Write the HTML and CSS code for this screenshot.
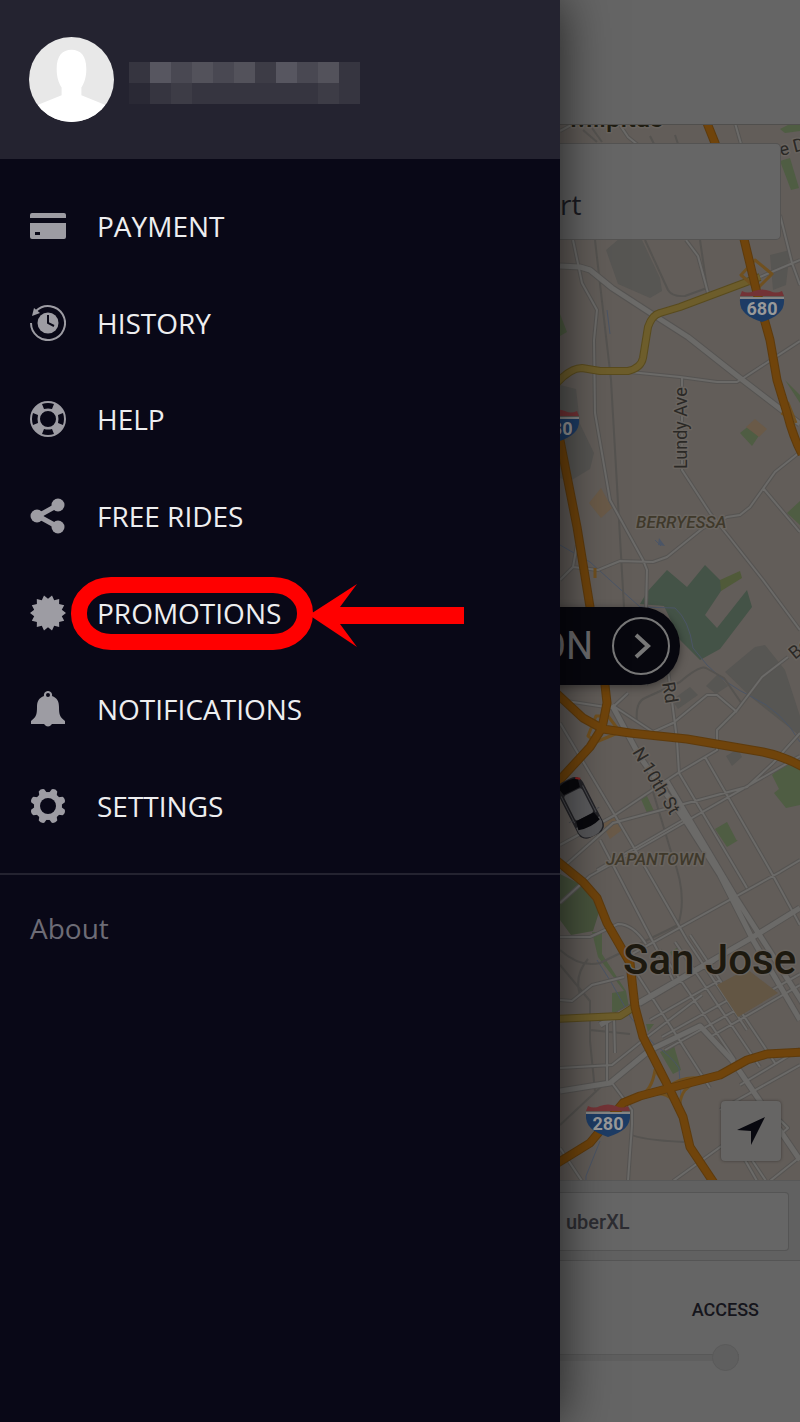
FILE: index.html
```html
<!DOCTYPE html>
<html lang="en">
<head>
    <meta charset="UTF-8">
    <meta name="viewport" content="width=device-width, initial-scale=1.0">
    <title>Menu</title>
    <link rel="stylesheet" href="styles.css">
</head>
<body>

    <div class="app">

        <!-- Side menu -->
        <aside class="drawer">
            <header class="profile">
                <svg class="avatar" viewBox="0 0 86 86" role="img" aria-label="Profile photo">
                    <clipPath id="round"><circle cx="43" cy="43" r="43"/></clipPath>
                    <g clip-path="url(#round)">
                        <rect width="86" height="86" fill="#e8e8e8"/>
                        <path fill="#fff" d="M43 13c9 0 15 6 15 19 0 9-2 14-5 19v8l25 10v17H8V69l25-10v-8c-3-5-5-10-5-19 0-13 6-19 15-19z"/>
                    </g>
                </svg>
                <svg class="name" viewBox="0 0 11 2" shape-rendering="crispEdges" aria-hidden="true">
                    <rect width="11" height="2" fill="#363540"/>
                    <path fill="#575660" d="M1 0h1v1h-1zM7 0h1v1h-1z"/>
                    <path fill="#53525b" d="M3 0h1v1h-1zM5 0h1v1h-1zM9 0h1v1h-1z"/>
                    <path fill="#494852" d="M2 0h1v1h-1zM4 0h1v1h-1zM8 0h1v1h-1z"/>
                    <path fill="#3d3c46" d="M6 0h1v1h-1zM2 1h1v1h-1zM9 1h1v1h-1z"/>
                    <path fill="#2a2935" d="M0 1h1v1h-1z"/>
                </svg>
            </header>

            <nav>
                <ul class="menu">
                    <li><a href="#payment">
                        <svg viewBox="0 0 36 36"><path d="M2 5h32a2 2 0 0 1 2 2v3H0V7a2 2 0 0 1 2-2z"/><path fill-rule="evenodd" d="M0 15h36v14a2 2 0 0 1-2 2H2a2 2 0 0 1-2-2zM5 24v3h5v-3z"/></svg>
                        PAYMENT</a></li>
                    <li><a href="#history">
                        <svg viewBox="0 0 36 36"><path class="line" d="M1 18a17 17 0 1 0 5-12"/><path d="M4 3l6 5-8 3z"/><circle cx="18" cy="18" r="10.500"/><path class="cut" d="M18 10v8l6 3"/></svg>
                        HISTORY</a></li>
                    <li><a href="#help">
                        <svg viewBox="0 0 36 36"><path fill-rule="evenodd" d="M18 0a18 18 0 1 0 0 36 18 18 0 0 0 0-36zm0 10a8 8 0 1 1 0 16 8 8 0 0 1 0-16z"/><g class="hole"><path id="gap" d="M12 3q6-2 12 0l-2 5q-4-1-8 0z"/><use href="#gap" transform="rotate(90 18 18)"/><use href="#gap" transform="rotate(180 18 18)"/><use href="#gap" transform="rotate(270 18 18)"/></g></svg>
                        HELP</a></li>
                    <li><a href="#free-rides">
                        <svg viewBox="0 0 36 36"><path class="link" d="M28 7L8 18l20 11"/><circle cx="28" cy="7" r="6.500"/><circle cx="7" cy="18" r="6.500"/><circle cx="28" cy="29" r="6.500"/></svg>
                        FREE RIDES</a></li>
                    <li><a href="#promotions">
                        <svg viewBox="0 0 36 36"><path d="M18 3.800L22 .5l2.200 4.700 5-1.300-.1 5.200 5.100 1.100-2.400 4.600L36 18l-4.200 3.200 2.400 4.600-5.100 1.100.1 5.200-5-1.300-2.200 4.700-4-3.300-4 3.300-2.200-4.700-5 1.300.1-5.200-5.100-1.100 2.400-4.600L0 18l4.200-3.200-2.400-4.600 5.100-1.100-.1-5.200 5 1.300L14 .5z"/></svg>
                        PROMOTIONS</a>
                        <svg class="callout" viewBox="0 0 394 73" aria-hidden="true">
                            <rect x="8" y="8" width="226" height="57" rx="32" ry="28" fill="none" stroke="#f00" stroke-width="16"/>
                            <path fill="#f00" d="M238 38l48-31-17 23h124v17H269l17 23z"/>
                        </svg>
                    </li>
                    <li><a href="#notifications">
                        <svg viewBox="0 0 36 36"><path fill-rule="evenodd" d="M18 0a4 4 0 0 1 4 5c5 2 7 5 7 11 0 8 1 10 6 14v3H22q-4 5-8 0H1v-3c5-4 6-6 6-14 0-6 2-9 7-11a4 4 0 0 1 4-5zm0 2a2 2 0 1 0 0 4 2 2 0 0 0 0-4z"/></svg>
                        NOTIFICATIONS</a></li>
                    <li><a href="#settings">
                        <svg viewBox="0 0 36 36"><circle cx="18" cy="18" r="14"/><path id="tooth" d="M14 5l1-4q3-2 6 0l1 4v26l-1 4q-3 2-6 0l-1-4z" transform="rotate(22.500 18 18)"/><use href="#tooth" transform="rotate(45 18 18)"/><use href="#tooth" transform="rotate(90 18 18)"/><use href="#tooth" transform="rotate(135 18 18)"/><circle class="hole" cx="18" cy="18" r="8"/></svg>
                        SETTINGS</a></li>
                </ul>
            </nav>

            <a class="about" href="#about">About</a>
        </aside>

        <!-- Ride screen, dimmed behind the menu -->
        <main class="ride">
            <header class="topbar"></header>

            <section class="map">
                <svg class="streets" viewBox="560 125 240 1056" preserveAspectRatio="xMinYMin slice" role="img" aria-label="Map of San Jose">
                    <defs>
                        <g id="shield">
                            <path fill="#1d3c65" d="M-22-5h44c1 12-7 18-22 23-15-5-23-11-22-23z"/>
                            <path fill="#733336" d="M-20-13q6 3 12 0 8-3 16 0 6 3 12 0l2 5h-44z"/>
                            <path stroke="#858585" stroke-width="2" d="M-22-6h44"/>
                        </g>
                    </defs>

                    <!-- parks, water and blocks -->
                    <g fill="#4f5d43">
                        <path d="M780 129l10-5h10v7l-15 2zM780 161l10-3 9 30-8 2zM560 314l7 18-7 4zM740 433l10-8 10 9-8 12zM787 513l13-12v24zM785 380l15 15v8z"/>
                        <path d="M640 797l6-3 8 17-6 4zM715 829l12-7 10 19-10 6zM772 775l12-12 16 6v36l-14 3-12-15 5-4zM724 840l14 0-10 6z"/>
                        <path fill="#48543d" d="M560 874l20 10 20 25-7 22-22 4-11-15z"/>
                        <path d="M592 932h10v22l24 37 4 22-18-1v-19l12-2-26-34zM660 1052l14-6 7 24-8 4zM646 1024l8 0-6 8zM670 952l10-6 3 8-10 4z"/>
                    </g>
                    <path fill="#445347" d="M647 592l20-22 20 17 18-22 20 20-20 30 12 13 30-38 5 17-32 42-20 11-20-20-16-34-24-2z"/>
                    <path fill="#505a39" d="M720 580l20-9 2 7-21 13z"/>
                    <g fill="#575653">
                        <path d="M606 250l14-12 22 2 18 38 2 13-12 7-32-14zM560 385l16 4 4 35 14 29-4 16-20 12-10-3zM770 255l20-5-4 35-13 5z"/>
                        <path d="M725 672l30-25 10-2 20 25 15 46v20l-48-38zM706 686l12-12 10 12-12 8zM672 700l18-13 8 8-20 14zM726 756l12-7 4 8-10 9z"/>
                    </g>
                    <path fill="#6a5a48" d="M589 503l12-15 11 20-11 10zM746 427l9-8 12 10-8 8zM601 822l12-8 9 16-12 9z"/>
                    <path class="river" d="M560 545l30 17 50 45 35 1q14 12 18 40l14 17q20 20 45 32 30 14 48 45M655 540l6 6M607 310l3 24M597 960l14 22 20 36 22 25q20 15 26 25l4 60 15 30M600 1141l-14 35v5"/>
                    <path fill="#4b5566" d="M659 538l6 8-7-1z"/>

                    <!-- rail and minor lines -->
                    <path class="rail" d="M595 240l16 140 7 123 6 104M645 240l23 50q4 7 17 6l22-8-7-48M583 130l14 12M592 128l10 14M675 135l3 9M650 136l4 8M637 722q-2-20 8-24l35-16q20-17 26-14l18 10 18 26M560 950q20 18 40 13l78-38q10-30-6-70l-21-70M560 965l30 36v40l5 50M590 1030l40 4M630 1134q10 6 54 8M560 1125l45-42M580 995q-6-20 8-36"/>

                    <!-- streets -->
                    <g class="casing">
                        <path id="minor" d="M560 131l13-7M620 125l8 12 10 8M735 123l6 21M573 240l9 43 15 27-3 30 1 73 15 87 33 60 4 10-1 40M686 240l12 16 10 37M780 215l12 48 8 22M760 277l40-17M800 341l-55 36-8 5h-20l-37-5-50-5M682 378v92l28 43 20 25 33 42 37 50M560 580l13-13 25 3 22-9 33 1 14-5 36-29 24-11 13-2 10-8 25-35 25-20M763 488l37 44M573 567l4-22M646 685l9-25M668 670l9 70 2 33 68 115M560 845l55-30 63-42 39-23v-20l20-20 25-33 26-20M615 707l38 25 20-9 34-28h10l20 17M560 870l53-47 134-36 26-24 27-30M560 723l53 89 24 41 50 87 60 90M600 840l73 140M705 757l65 113 30 55M597 870l93-54M560 700l52 8 16-15M560 903l30-27 27-15 183-105M630 955l150-83 20-12M560 937h30l28-13q15 0 28 20M560 1000l12 1 20-16 32-8M560 1068l52-3 35-28 55-42M607 1017v65M614 1017l1 36M630 963l80 125M660 950l75 110M675 942l85 125M690 935l85 128M640 1005l75-44M650 1020l70-40M662 1037l75-42M665 1050l135-76M710 1037l90-52M720 1110l80-45M740 1085l60-36M612 1083l20 27v15l-4 56M560 1148l22 33M673 1181l50-36M745 1160l12 21M752 1160l14 21M770 1181l30-24M780 1120l8 8-12 10"/>
                        <path class="wide" d="M560 266l20 1 10 3 22 18 40 26 36 23 52 41 60 46M612 705l28 52 47 66 33 52 33 65 47 80M666 780l70 118 70 110M800 908l-47 29-153 88M560 1091l50-8 40-33 50-24 32 34 68 100"/>
                    </g>
                    <use class="street" href="#minor"/>
                    <path class="avenue" d="M560 266l20 1 10 3 22 18 40 26 36 23 52 41 60 46M612 705l28 52 47 66 33 52 33 65 47 80M666 780l70 118 70 110M800 908l-47 29-153 88M560 1091l50-8 40-33 50-24 32 34 68 100"/>
                    <path fill="#635644" d="M717 985l30-16 31 24-40 24z"/>

                    <!-- highways -->
                    <path id="route" class="yellow-edge" d="M556 384q14-16 26-16l18 3h28q13-3 15-13l5-31q4-12 12-14l20-6 80-30M556 1019l64-3 14-9"/>
                    <path class="yellow" d="M556 384q14-16 26-16l18 3h28q13-3 15-13l5-31q4-12 12-14l20-6 80-30M556 1019l64-3 14-9"/>
                    <path class="ramp" d="M741 275l14-15 17 14-15 15zM588 736l8-20h12l12 16-24 10zM640 1096q12-6 15-26l12 18q14-12 32-10l-14 12q-10 14 0 30-12-28-28-26zM595 578v-10M782 415l6-12 8 20"/>
                    <path class="highway-edge" d="M705 118l10 25 29 96 13 54 13 47 7 40 10 33q6 24 15 41M556 420l21 107 13 80 15 78 2 18-5 25-12 19-34 37M556 693l27 25 20 11 27 4 57 6 76 13q20 4 40 15M556 860l27 22 14 16 10 25 23 40 5 44 8 30 27 53 13 27 7 30 24 36M556 1164l34-21 33-40 17-7 30-8 50-13 27-15 20-6 36-2"/>
                    <path class="highway" d="M705 118l10 25 29 96 13 54 13 47 7 40 10 33q6 24 15 41M556 420l21 107 13 80 15 78 2 18-5 25-12 19-34 37M556 693l27 25 20 11 27 4 57 6 76 13q20 4 40 15M556 860l27 22 14 16 10 25 23 40 5 44 8 30 27 53 13 27 7 30 24 36M556 1164l34-21 33-40 17-7 30-8 50-13 27-15 20-6 36-2"/>

                    <!-- labels -->
                    <use href="#shield" x="762" y="304"/>
                    <use href="#shield" x="557" y="424"/>
                    <use href="#shield" x="608" y="1119"/>
                    <g class="number">
                        <text x="762" y="315">680</text>
                        <text x="557" y="435">880</text>
                        <text x="608" y="1130">280</text>
                    </g>
                    <text class="town" x="570" y="127">Milpitas</text>
                    <text class="city" x="623" y="974">San Jose</text>
                    <text class="district" x="636" y="528">BERRYESSA</text>
                    <text class="district" x="606" y="865">JAPANTOWN</text>
                    <g class="road">
                        <text transform="translate(687 469) rotate(-90)">Lundy Ave</text>
                        <text transform="translate(662 683) rotate(80)">Rd</text>
                        <text transform="translate(632 752) rotate(59)">N 10th St</text>
                        <text transform="translate(795 660) rotate(-40)">Be</text>
                        <text transform="translate(781 156) rotate(-14)">e D</text>
                    </g>

                    <!-- car -->
                    <g transform="translate(580 807) rotate(-27)">
                        <rect x="-14" y="-30" width="28" height="62" rx="9" fill="#232327"/>
                        <path fill="#565658" d="M-13 17h26v6q-2 9-13 9t-13-9z"/>
                        <rect x="-10" y="-17" width="20" height="28" rx="3" fill="#5c5c5e"/>
                        <path fill="#08080c" d="M-11-27q11-4 22 0l-2 9H-9zM-12 20l2-9h20l2 9q-12 4-24 0z"/>
                        <path stroke="#4c4c50" d="M-12-18v30M12-18v30M-17 9h4M13 9h4"/>
                        <path stroke="#8b2020" stroke-width="2" d="M9-28l4 3"/>
                    </g>
                </svg>

                <div class="pickup">rt</div>

                <button class="set-location" type="button">ON
                    <svg viewBox="0 0 60 60" aria-hidden="true"><circle cx="30" cy="30" r="28" stroke-width="2"/><path stroke-width="4" d="M25 19l12 11-12 11"/></svg>
                </button>

                <button class="locate" type="button" aria-label="My location">
                    <svg viewBox="0 0 30 30"><path fill="#08080f" d="M29 1L15 29V15L1 14z"/></svg>
                </button>
            </section>

            <section class="products">
                <button class="product" type="button">uberXL</button>
            </section>

            <section class="level">
                <label for="level">ACCESS</label>
                <input type="range" id="level" min="0" max="3" value="3">
            </section>
        </main>
    </div>

</body>
</html>
```
FILE: styles.css
```css
* {
    box-sizing: border-box;
}

body {
    margin: 0;
    background-color: #656565;
    font-family: "Open Sans", "Noto Sans", sans-serif;
}

button {
    border: none;
    padding: 0;
    cursor: pointer;
}

.app {
    display: flex;
    min-height: 100vh;
    overflow: hidden;
}

/* Side menu */
.drawer {
    position: relative;
    z-index: 1;
    width: 70%;
    background-color: #090817;
    box-shadow: 0 0 48px rgba(0, 0, 0, 0.7);
}

.profile {
    display: flex;
    align-items: center;
    gap: 15px;
    height: 159px;
    padding-left: 29px;
    background-color: #242330;
}

.avatar {
    width: 85px;
    height: 85px;
}

.name {
    width: 231px;
    height: 42px;
    margin-top: 7px;
}

.menu {
    display: grid;
    grid-template-rows: repeat(7, 1fr);
    height: 716px;
    margin: 0;
    padding: 19px 0;
    list-style: none;
    border-bottom: 2px solid #242330;
}

.menu li {
    position: relative;
    display: grid;
}

.menu a {
    display: flex;
    align-items: center;
    gap: 31px;
    padding-left: 30px;
    color: #eeeef0;
    font-size: 28px;
    line-height: 38px;
    text-decoration: none;
}

.menu a svg {
    width: 36px;
    height: 36px;
    fill: #9d9ca3;
}

.menu .line {
    fill: none;
    stroke: #9d9ca3;
    stroke-width: 2;
}

.menu .link {
    fill: none;
    stroke: #9d9ca3;
    stroke-width: 5;
}

.menu .cut {
    fill: none;
    stroke: #090817;
    stroke-width: 2;
}

.menu .hole {
    fill: #090817;
}

.callout {
    position: absolute;
    top: 13px;
    left: 71px;
    width: 394px;
    height: 73px;
}

.about {
    display: block;
    padding: 34px 30px;
    color: #6d6c76;
    font-size: 28px;
    line-height: 38px;
    text-decoration: none;
}

/* Ride screen */
.ride {
    display: flex;
    flex-direction: column;
    width: 30%;
    background-color: #656565;
}

.topbar {
    height: 125px;
    border-bottom: 1px solid #504f4d;
}

.map {
    position: relative;
    flex: 1;
    overflow: hidden;
    background-color: #625d59;
}

.streets {
    position: absolute;
    top: 0;
    left: 0;
    width: 100%;
    height: 100%;
    fill: none;
    stroke-linejoin: round;
}

.casing {
    stroke: #565452;
    stroke-width: 4;
}

.casing .wide {
    stroke-width: 7;
}

.street {
    stroke: #6b6a68;
    stroke-width: 2;
}

.avenue {
    stroke: #6b6a68;
    stroke-width: 5;
}

.rail {
    stroke: #555350;
    stroke-width: 2;
}

.river {
    stroke: #4b5566;
    stroke-width: 1;
}

.yellow-edge {
    stroke: #594b1e;
    stroke-width: 8;
}

.yellow {
    stroke: #6d5d2b;
    stroke-width: 6;
}

.ramp {
    stroke: #70501f;
    stroke-width: 3;
}

.highway-edge {
    stroke: #5e3b0d;
    stroke-width: 9;
}

.highway {
    stroke: #70440b;
    stroke-width: 7;
}

.streets text {
    font-family: Roboto, sans-serif;
    paint-order: stroke;
    stroke: #69645f;
    stroke-width: 3;
}

.streets .number text {
    fill: #999;
    stroke: none;
    font-size: 18px;
    font-weight: 700;
    text-anchor: middle;
}

.streets .town {
    fill: #201d12;
    font-size: 26px;
    font-weight: 500;
}

.streets .city {
    fill: #1d190f;
    font-size: 42px;
    font-weight: 500;
}

.streets .district {
    fill: #3f392b;
    font-size: 17px;
    font-style: italic;
    font-weight: 500;
}

.road {
    fill: #2b2926;
    font-size: 18px;
}

.pickup {
    position: relative;
    height: 97px;
    margin: 18px 19px 0 0;
    padding-top: 42px;
    border: 1px solid #545352;
    border-left: none;
    border-radius: 0 5px 5px 0;
    background-color: #666;
    color: #1b1b22;
    font-size: 28px;
    line-height: 36px;
}

.set-location {
    position: absolute;
    top: 482px;
    right: 120px;
    display: flex;
    align-items: center;
    gap: 18px;
    height: 78px;
    padding-right: 9px;
    border-radius: 0 39px 39px 0;
    background-color: #07070e;
    color: #6c6c6e;
    font-family: Roboto, sans-serif;
    font-size: 38px;
    font-weight: 400;
    box-shadow: 0 2px 10px rgba(0, 0, 0, 0.4);
}

.set-location svg {
    width: 60px;
    height: 60px;
    fill: none;
    stroke: #777;
}

.locate {
    position: absolute;
    right: 19px;
    bottom: 19px;
    display: grid;
    place-items: center;
    width: 60px;
    height: 60px;
    border-radius: 4px;
    background-color: #666564;
    box-shadow: 0 0 3px rgba(0, 0, 0, 0.4);
}

.locate svg {
    width: 30px;
    height: 30px;
}

.products {
    height: 81px;
    padding: 11px 11px 0 0;
    border-top: 1px solid #585858;
    border-bottom: 1px solid #555;
    background-color: #616161;
}

.product {
    width: 100%;
    height: 59px;
    padding-left: 6px;
    border: 1px solid #555;
    border-left: none;
    border-radius: 0 4px 4px 0;
    background-color: #666;
    color: #2d2d32;
    font-family: Roboto, sans-serif;
    font-size: 20px;
    font-weight: 500;
    text-align: left;
}

.level {
    height: 161px;
    padding-top: 37px;
    text-align: right;
}

.level label {
    display: block;
    padding-right: 41px;
    color: #15151c;
    font-family: Roboto, sans-serif;
    font-size: 18px;
    font-weight: 500;
    line-height: 24px;
}

.level input {
    display: block;
    appearance: none;
    width: 100%;
    height: 28px;
    margin: 21px 0 0;
    padding-right: 61px;
    background: none;
}

.level input::-webkit-slider-runnable-track {
    height: 7px;
    border-top: 1px solid #585858;
    background-color: #5f5f5f;
}

.level input::-webkit-slider-thumb {
    appearance: none;
    width: 27px;
    height: 27px;
    margin-top: -11px;
    border: 1px solid #5a5a5a;
    border-radius: 50%;
    background-color: #5f5f5f;
}
```
